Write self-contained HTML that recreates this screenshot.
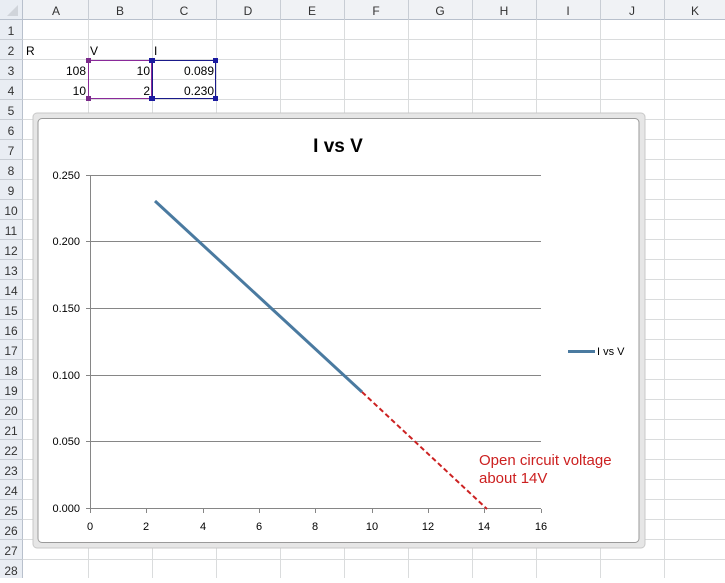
<!DOCTYPE html>
<html><head><style>
body{margin:0;width:725px;height:578px;overflow:hidden;background:#fff;font-family:"Liberation Sans",sans-serif}
</style></head><body>
<svg width="725" height="578" xmlns="http://www.w3.org/2000/svg" font-family="Liberation Sans, sans-serif">
<rect width="725" height="578" fill="#fff"/>
<!-- grid lines -->
<g stroke="#dadcdd" stroke-width="1">
<line x1="88.5" y1="20" x2="88.5" y2="578"/><line x1="152.5" y1="20" x2="152.5" y2="578"/><line x1="216.5" y1="20" x2="216.5" y2="578"/><line x1="280.5" y1="20" x2="280.5" y2="578"/><line x1="344.5" y1="20" x2="344.5" y2="578"/><line x1="408.5" y1="20" x2="408.5" y2="578"/><line x1="472.5" y1="20" x2="472.5" y2="578"/><line x1="536.5" y1="20" x2="536.5" y2="578"/><line x1="600.5" y1="20" x2="600.5" y2="578"/><line x1="664.5" y1="20" x2="664.5" y2="578"/>
<line x1="23" y1="39.5" x2="725" y2="39.5"/><line x1="23" y1="59.5" x2="725" y2="59.5"/><line x1="23" y1="79.5" x2="725" y2="79.5"/><line x1="23" y1="99.5" x2="725" y2="99.5"/><line x1="23" y1="119.5" x2="725" y2="119.5"/><line x1="23" y1="139.5" x2="725" y2="139.5"/><line x1="23" y1="159.5" x2="725" y2="159.5"/><line x1="23" y1="179.5" x2="725" y2="179.5"/><line x1="23" y1="199.5" x2="725" y2="199.5"/><line x1="23" y1="219.5" x2="725" y2="219.5"/><line x1="23" y1="239.5" x2="725" y2="239.5"/><line x1="23" y1="259.5" x2="725" y2="259.5"/><line x1="23" y1="279.5" x2="725" y2="279.5"/><line x1="23" y1="299.5" x2="725" y2="299.5"/><line x1="23" y1="319.5" x2="725" y2="319.5"/><line x1="23" y1="339.5" x2="725" y2="339.5"/><line x1="23" y1="359.5" x2="725" y2="359.5"/><line x1="23" y1="379.5" x2="725" y2="379.5"/><line x1="23" y1="399.5" x2="725" y2="399.5"/><line x1="23" y1="419.5" x2="725" y2="419.5"/><line x1="23" y1="439.5" x2="725" y2="439.5"/><line x1="23" y1="459.5" x2="725" y2="459.5"/><line x1="23" y1="479.5" x2="725" y2="479.5"/><line x1="23" y1="499.5" x2="725" y2="499.5"/><line x1="23" y1="519.5" x2="725" y2="519.5"/><line x1="23" y1="539.5" x2="725" y2="539.5"/><line x1="23" y1="559.5" x2="725" y2="559.5"/>
</g>
<!-- headers -->
<rect x="0" y="0" width="725" height="20" fill="#f0f2f5"/>
<rect x="0" y="0" width="23" height="578" fill="#e9edf3"/>
<line x1="0" y1="19.5" x2="725" y2="19.5" stroke="#b8c0cc"/>
<line x1="22.5" y1="0" x2="22.5" y2="578" stroke="#b8c0cc"/>
<path d="M18 5 L18 16 L7 16 Z" fill="#d0d4da"/>
<g stroke="#c8cdd4"><line x1="88.5" y1="0" x2="88.5" y2="20"/><line x1="152.5" y1="0" x2="152.5" y2="20"/><line x1="216.5" y1="0" x2="216.5" y2="20"/><line x1="280.5" y1="0" x2="280.5" y2="20"/><line x1="344.5" y1="0" x2="344.5" y2="20"/><line x1="408.5" y1="0" x2="408.5" y2="20"/><line x1="472.5" y1="0" x2="472.5" y2="20"/><line x1="536.5" y1="0" x2="536.5" y2="20"/><line x1="600.5" y1="0" x2="600.5" y2="20"/><line x1="664.5" y1="0" x2="664.5" y2="20"/></g>
<g font-size="12" fill="#333" text-anchor="middle">
<text x="56" y="15">A</text><text x="120" y="15">B</text><text x="184" y="15">C</text><text x="248" y="15">D</text><text x="312" y="15">E</text><text x="376" y="15">F</text><text x="440" y="15">G</text><text x="504" y="15">H</text><text x="568" y="15">I</text><text x="632" y="15">J</text><text x="695" y="15">K</text>
</g>
<g stroke="#c8cdd4"><line x1="0" y1="39.5" x2="23" y2="39.5"/><line x1="0" y1="59.5" x2="23" y2="59.5"/><line x1="0" y1="79.5" x2="23" y2="79.5"/><line x1="0" y1="99.5" x2="23" y2="99.5"/><line x1="0" y1="119.5" x2="23" y2="119.5"/><line x1="0" y1="139.5" x2="23" y2="139.5"/><line x1="0" y1="159.5" x2="23" y2="159.5"/><line x1="0" y1="179.5" x2="23" y2="179.5"/><line x1="0" y1="199.5" x2="23" y2="199.5"/><line x1="0" y1="219.5" x2="23" y2="219.5"/><line x1="0" y1="239.5" x2="23" y2="239.5"/><line x1="0" y1="259.5" x2="23" y2="259.5"/><line x1="0" y1="279.5" x2="23" y2="279.5"/><line x1="0" y1="299.5" x2="23" y2="299.5"/><line x1="0" y1="319.5" x2="23" y2="319.5"/><line x1="0" y1="339.5" x2="23" y2="339.5"/><line x1="0" y1="359.5" x2="23" y2="359.5"/><line x1="0" y1="379.5" x2="23" y2="379.5"/><line x1="0" y1="399.5" x2="23" y2="399.5"/><line x1="0" y1="419.5" x2="23" y2="419.5"/><line x1="0" y1="439.5" x2="23" y2="439.5"/><line x1="0" y1="459.5" x2="23" y2="459.5"/><line x1="0" y1="479.5" x2="23" y2="479.5"/><line x1="0" y1="499.5" x2="23" y2="499.5"/><line x1="0" y1="519.5" x2="23" y2="519.5"/><line x1="0" y1="539.5" x2="23" y2="539.5"/><line x1="0" y1="559.5" x2="23" y2="559.5"/></g>
<g font-size="12" fill="#333" text-anchor="middle">
<text x="11" y="35">1</text><text x="11" y="55">2</text><text x="11" y="75">3</text><text x="11" y="95">4</text><text x="11" y="115">5</text><text x="11" y="135">6</text><text x="11" y="155">7</text><text x="11" y="175">8</text><text x="11" y="195">9</text><text x="11" y="215">10</text><text x="11" y="235">11</text><text x="11" y="255">12</text><text x="11" y="275">13</text><text x="11" y="295">14</text><text x="11" y="315">15</text><text x="11" y="335">16</text><text x="11" y="355">17</text><text x="11" y="375">18</text><text x="11" y="395">19</text><text x="11" y="415">20</text><text x="11" y="435">21</text><text x="11" y="455">22</text><text x="11" y="475">23</text><text x="11" y="495">24</text><text x="11" y="515">25</text><text x="11" y="535">26</text><text x="11" y="555">27</text><text x="11" y="575">28</text>
</g>
<!-- cells -->
<g font-size="12" fill="#000">
<text x="26" y="55">R</text><text x="90" y="55">V</text><text x="154" y="55">I</text>
<text x="86" y="75" text-anchor="end">108</text><text x="86" y="95" text-anchor="end">10</text>
<text x="150" y="75" text-anchor="end">10</text><text x="150" y="95" text-anchor="end">2</text>
<text x="214" y="75" text-anchor="end">0.089</text><text x="214" y="95" text-anchor="end">0.230</text>
</g>
<rect x="88.5" y="60.5" width="63" height="38" fill="none" stroke="#8a2a9a"/>
<rect x="152.5" y="60.5" width="63" height="38" fill="none" stroke="#1a1a8a"/>
<g fill="#7a2a8a"><rect x="86" y="58" width="5" height="5"/><rect x="86" y="96" width="5" height="5"/></g>
<g fill="#1a1aa0"><rect x="149" y="58" width="6" height="5"/><rect x="149" y="96" width="6" height="5"/><rect x="213" y="58" width="5" height="5"/><rect x="213" y="96" width="5" height="5"/></g>
<!-- chart frame -->
<rect x="33" y="113" width="612" height="435" rx="4" fill="#e6e6e6" stroke="#c8c8c8"/>
<rect x="38" y="118.5" width="601" height="424" rx="4" fill="#fff" stroke="#9a9a9a"/>
<text x="338" y="152" font-size="19" font-weight="bold" text-anchor="middle" fill="#000">I vs V</text>
<g stroke="#868686" stroke-width="1">
<line x1="90" y1="175.5" x2="541" y2="175.5"/><line x1="90" y1="241.5" x2="541" y2="241.5"/><line x1="90" y1="308.5" x2="541" y2="308.5"/><line x1="90" y1="375.5" x2="541" y2="375.5"/><line x1="90" y1="441.5" x2="541" y2="441.5"/><line x1="90" y1="508.5" x2="541" y2="508.5"/>
<line x1="90.5" y1="175" x2="90.5" y2="509"/>
<line x1="86" y1="175.5" x2="90" y2="175.5"/><line x1="86" y1="241.5" x2="90" y2="241.5"/><line x1="86" y1="308.5" x2="90" y2="308.5"/><line x1="86" y1="375.5" x2="90" y2="375.5"/><line x1="86" y1="441.5" x2="90" y2="441.5"/><line x1="86" y1="508.5" x2="90" y2="508.5"/>
<line x1="90.5" y1="509" x2="90.5" y2="513"/><line x1="146.5" y1="509" x2="146.5" y2="513"/><line x1="203.5" y1="509" x2="203.5" y2="513"/><line x1="259.5" y1="509" x2="259.5" y2="513"/><line x1="315.5" y1="509" x2="315.5" y2="513"/><line x1="372.5" y1="509" x2="372.5" y2="513"/><line x1="428.5" y1="509" x2="428.5" y2="513"/><line x1="484.5" y1="509" x2="484.5" y2="513"/><line x1="541.5" y1="509" x2="541.5" y2="513"/>
</g>
<g font-size="11" fill="#000" text-anchor="end">
<text x="80" y="179">0.250</text><text x="80" y="245">0.200</text><text x="80" y="312">0.150</text><text x="80" y="379">0.100</text><text x="80" y="445">0.050</text><text x="80" y="512">0.000</text>
</g>
<g font-size="11" fill="#000" text-anchor="middle">
<text x="90" y="530">0</text><text x="146" y="530">2</text><text x="203" y="530">4</text><text x="259" y="530">6</text><text x="315" y="530">8</text><text x="372" y="530">10</text><text x="428" y="530">12</text><text x="484" y="530">14</text><text x="541" y="530">16</text>
</g>
<line x1="155" y1="201" x2="362" y2="392" stroke="#4a7aa0" stroke-width="3"/>
<line x1="362" y1="392" x2="487" y2="509" stroke="#cc2222" stroke-width="2" stroke-dasharray="5,3"/>
<line x1="568" y1="351.5" x2="595" y2="351.5" stroke="#4a7aa0" stroke-width="3"/>
<text x="597" y="355" font-size="11" fill="#000">I vs V</text>
<text x="479" y="465" font-size="15" fill="#cc2020">Open circuit voltage</text>
<text x="479" y="483" font-size="15" fill="#cc2020">about 14V</text>
</svg>
</body></html>
